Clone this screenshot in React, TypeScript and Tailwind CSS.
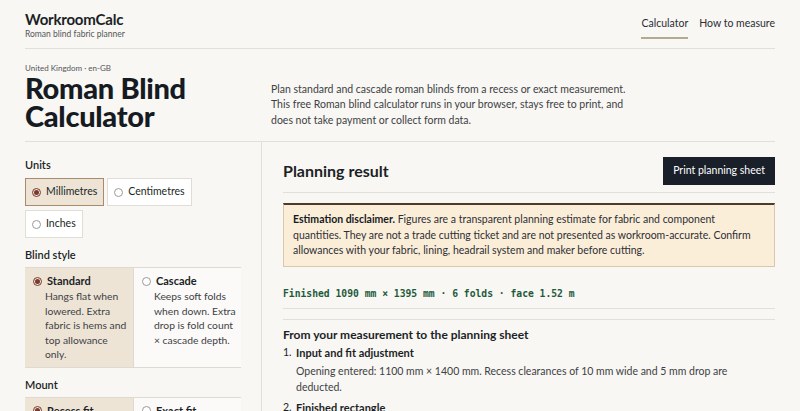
import { useState } from "react";

const font = { fontFamily: "Lato, 'Noto Sans', sans-serif" };

type Option = { id: string; label: string; hint?: string };

const units: Option[] = [
  { id: "mm", label: "Millimetres" },
  { id: "cm", label: "Centimetres" },
  { id: "in", label: "Inches" },
];

const styles: Option[] = [
  { id: "standard", label: "Standard", hint: "Hangs flat when lowered. Extra fabric is hems and top allowance only." },
  { id: "cascade", label: "Cascade", hint: "Keeps soft folds when down. Extra drop is fold count × cascade depth." },
];

const mounts: Option[] = [
  { id: "recess", label: "Recess fit", hint: "Clearances are deducted from the opening." },
  { id: "exact", label: "Exact fit", hint: "Your measurement is the finished size." },
];

const Dot = ({ on }: { on: boolean }) => (
  <span
    className={`inline-flex h-[9px] w-[9px] shrink-0 items-center justify-center rounded-full border ${on ? "border-[#7a3b2e]" : "border-[#9a9a9a] bg-white"}`}
  >
    {on && <span className="h-[5px] w-[5px] rounded-full bg-[#7a3b2e]" />}
  </span>
);

const CardGroup = ({ options, value, onChange }: { options: Option[]; value: string; onChange: (v: string) => void }) => (
  <div className="grid w-[216px] grid-cols-2 border-y border-[#dedad2]">
    {options.map((o, i) => (
      <button
        key={o.id}
        onClick={() => onChange(o.id)}
        className={`flex flex-col items-start pb-[5px] pl-[8px] pr-[2px] pt-[6px] text-left ${i > 0 ? "border-l border-[#dedad2]" : ""} ${value === o.id ? "bg-[#ede4d6]" : "bg-[#fbfaf8]"}`}
      >
        <span className="flex items-center gap-[5px] text-[11px] font-bold leading-[14px] text-[#1c1f26]">
          <Dot on={value === o.id} />
          {o.label}
        </span>
        <span className="mt-[1px] pl-[12px] text-[10.3px] leading-[14.5px] text-[#3e3f44]">{o.hint}</span>
      </button>
    ))}
  </div>
);

export default function App() {
  const [unit, setUnit] = useState("mm");
  const [style, setStyle] = useState("standard");
  const [mount, setMount] = useState("recess");

  return (
    <div className="min-h-screen bg-[#f8f7f3] text-[#1c1f26]" style={font}>
      <div className="mx-[25px]">
        {/* Header */}
        <header className="flex items-start justify-between border-b border-[#e2dfd8] pb-[8px] pt-[10px]">
          <div>
            <div className="text-[15px] font-bold leading-[18px] tracking-[-0.2px]">WorkroomCalc</div>
            <div className="mt-[1px] text-[8.5px] leading-[11px] text-[#55565a]">Roman blind fabric planner</div>
          </div>
          <nav className="flex gap-[11px] pt-[6px] text-[10.5px] leading-[14px] text-[#2b2d33]">
            <a className="border-b-2 border-[#b3aa92] pb-[7px]">Calculator</a>
            <a className="pb-[7px]">How to measure</a>
          </nav>
        </header>

        {/* Hero */}
        <section className="flex items-end border-b border-[#e2dfd8] pb-[11px] pt-[14px]">
          <div className="w-[246px]">
            <div className="text-[8px] leading-[10px] text-[#55565a]">United Kingdom · en-GB</div>
            <h1 className="mt-[1px] text-[29px] font-black leading-[28px] tracking-[-0.3px] text-[#161a22]">
              Roman Blind Calculator
            </h1>
          </div>
          <p className="w-[356px] pb-[2px] text-[10.5px] leading-[15.5px] text-[#3e3f44]">
            Plan standard and cascade roman blinds from a recess or exact measurement. This free Roman blind calculator
            runs in your browser, stays free to print, and does not take payment or collect form data.
          </p>
        </section>

        {/* Body */}
        <div className="grid grid-cols-[237px_1fr]">
          <aside className="border-r border-[#e2dfd8] pt-[16px]">
            <div className="text-[11px] font-semibold leading-[14px]">Units</div>
            <div className="mt-[6px] flex w-[200px] flex-wrap gap-x-[3px] gap-y-[4px]">
              {units.map((u) => (
                <button
                  key={u.id}
                  onClick={() => setUnit(u.id)}
                  className={`flex h-[28px] items-center gap-[5px] border px-[6px] text-[10.5px] ${unit === u.id ? "border-[#a98a6c] bg-[#ede4d6]" : "border-[#e0ddd6] bg-white"}`}
                >
                  <Dot on={unit === u.id} />
                  {u.label}
                </button>
              ))}
            </div>

            <div className="mt-[10px] text-[11px] font-semibold leading-[14px]">Blind style</div>
            <div className="mt-[5px]">
              <CardGroup options={styles} value={style} onChange={setStyle} />
            </div>

            <div className="mt-[10px] text-[11px] font-semibold leading-[14px]">Mount</div>
            <div className="mt-[5px]">
              <CardGroup options={mounts} value={mount} onChange={setMount} />
            </div>
          </aside>

          <main className="pl-[21px] pt-[15px]">
            <div className="flex items-center justify-between border-b border-[#e2dfd8] pb-[7px]">
              <h2 className="text-[16px] font-bold">Planning result</h2>
              <button className="h-[28px] bg-[#19202a] px-[10px] text-[10.5px] text-white">Print planning sheet</button>
            </div>

            <div className="mt-[10px] border border-t-2 border-[#d9c9a9] border-t-[#4e3b2a] bg-[#fbeed9] px-[9px] pb-[7px] pt-[7px] text-[10.5px] leading-[15.5px] text-[#2e2f34]">
              <strong className="font-bold text-[#161a22]">Estimation disclaimer.</strong> Figures are a transparent
              planning estimate for fabric and component quantities. They are not a trade cutting ticket and are not
              presented as workroom-accurate. Confirm allowances with your fabric, lining, headrail system and maker
              before cutting.
            </div>

            <div
              className="mt-[20px] border-b border-[#e2dfd8] pb-[7px] text-[9.7px] font-bold leading-[14px] text-[#1f5a3c]"
              style={{ fontFamily: "'DejaVu Sans Mono', monospace" }}
            >
              Finished 1090 mm × 1395 mm · 6 folds · face 1.52 m
            </div>

            <div className="mt-[10px] border-t border-[#e2dfd8] pt-[7px]">
              <h3 className="text-[12px] font-bold leading-[16px]">From your measurement to the planning sheet</h3>
              <ol className="mt-[2px] text-[11px]">
                <li className="flex gap-[4px]">
                  <span className="w-[9px] shrink-0 text-[10.5px] leading-[15px]">1.</span>
                  <div>
                    <div className="font-bold leading-[15px]">Input and fit adjustment</div>
                    <p className="mt-[3px] text-[10.5px] leading-[16px] text-[#3e3f44]">
                      Opening entered: 1100 mm × 1400 mm. Recess clearances of 10 mm wide and 5 mm drop are deducted.
                    </p>
                  </div>
                </li>
                <li className="mt-[5px] flex gap-[4px]">
                  <span className="w-[9px] shrink-0 text-[10.5px] leading-[15px]">2.</span>
                  <div>
                    <div className="font-bold leading-[15px]">Finished rectangle</div>
                    <p className="mt-[3px] text-[10.5px] leading-[16px] text-[#3e3f44]">
                      Finished size 1090 mm × 1395 mm after clearances.
                    </p>
                  </div>
                </li>
              </ol>
            </div>
          </main>
        </div>
      </div>
    </div>
  );
}
